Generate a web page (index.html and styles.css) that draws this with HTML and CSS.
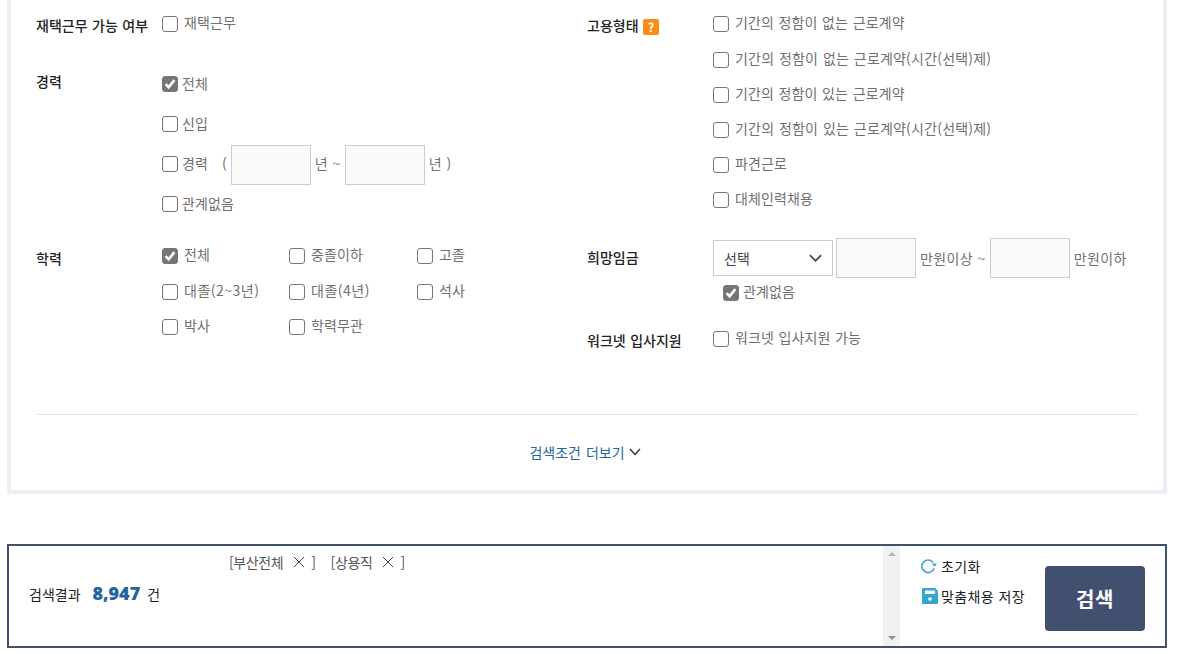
FILE: index.html
```html
<!DOCTYPE html>
<html lang="ko">
<head>
    <meta charset="UTF-8">
    <meta name="viewport" content="width=device-width, initial-scale=1.0">
    <title>채용정보 상세검색</title>
    <link rel="stylesheet" href="styles.css">
</head>
<body>

    <div class="search-panel">
        <div class="search-columns">
            <div class="search-col">
                <div class="field field-top">
                    <div class="field-label">재택근무 가능 여부</div>
                    <div class="field-body">
                        <label class="check-row"><span class="box"></span>재택근무</label>
                    </div>
                </div>

                <div class="field field-career">
                    <div class="field-label">경력</div>
                    <div class="field-body">
                        <label class="check-row tall tight"><span class="box on"><svg viewBox="0 0 14 14"><path d="M2.6 7.2 5.6 10.2 11.4 3.2" /></svg></span>전체</label>
                        <label class="check-row tall tight"><span class="box"></span>신입</label>
                        <div class="check-row tall tight">
                            <span class="box"></span>경력
                            <span class="paren">(</span>
                            <input type="text" class="text-box">
                            <span class="unit">년 ~</span>
                            <input type="text" class="text-box">
                            <span class="unit">년 )</span>
                        </div>
                        <label class="check-row tall tight"><span class="box"></span>관계없음</label>
                    </div>
                </div>

                <div class="field field-edu">
                    <div class="field-label">학력</div>
                    <div class="field-body edu-grid">
                        <label class="check-row"><span class="box on"><svg viewBox="0 0 14 14"><path d="M2.6 7.2 5.6 10.2 11.4 3.2" /></svg></span>전체</label>
                        <label class="check-row"><span class="box"></span>중졸이하</label>
                        <label class="check-row"><span class="box"></span>고졸</label>
                        <label class="check-row edu-wide"><span class="box"></span>대졸(2~3년)</label>
                        <label class="check-row edu-wide"><span class="box"></span>대졸(4년)</label>
                        <label class="check-row"><span class="box"></span>석사</label>
                        <label class="check-row"><span class="box"></span>박사</label>
                        <label class="check-row"><span class="box"></span>학력무관</label>
                    </div>
                </div>
            </div>

            <div class="search-col">
                <div class="field field-top">
                    <div class="field-label">고용형태 <span class="help-badge">?</span></div>
                    <div class="field-body">
                        <label class="check-row"><span class="box"></span>기간의 정함이 없는 근로계약</label>
                        <label class="check-row wide-text"><span class="box"></span>기간의 정함이 없는 근로계약(시간(선택)제)</label>
                        <label class="check-row"><span class="box"></span>기간의 정함이 있는 근로계약</label>
                        <label class="check-row wide-text"><span class="box"></span>기간의 정함이 있는 근로계약(시간(선택)제)</label>
                        <label class="check-row"><span class="box"></span>파견근로</label>
                        <label class="check-row"><span class="box"></span>대체인력채용</label>
                    </div>
                </div>

                <div class="field field-pay">
                    <div class="field-label">희망임금</div>
                    <div class="field-body">
                        <div class="pay-row">
                            <div class="select-box">선택
                                <svg viewBox="0 0 14 8"><path d="M1 1 7 7 13 1" /></svg>
                            </div>
                            <input type="text" class="text-box">
                            <span class="unit">만원이상 ~</span>
                            <input type="text" class="text-box">
                            <span class="unit">만원이하</span>
                        </div>
                        <label class="check-row pay-none tight"><span class="box on"><svg viewBox="0 0 14 14"><path d="M2.6 7.2 5.6 10.2 11.4 3.2" /></svg></span>관계없음</label>
                    </div>
                </div>

                <div class="field field-worknet">
                    <div class="field-label">워크넷 입사지원</div>
                    <div class="field-body">
                        <label class="check-row"><span class="box"></span>워크넷 입사지원 가능</label>
                    </div>
                </div>
            </div>
        </div>

        <div class="more-row">
            <a class="more-link" href="#">검색조건 더보기
                <svg viewBox="0 0 12 8"><path d="M1 1 6 6.5 11 1" /></svg>
            </a>
        </div>
    </div>

    <div class="result-bar">
        <div class="result-count">검색결과 <strong>8,947</strong> 건</div>
        <div class="result-tags">
            <span class="tag">[부산전체<svg viewBox="0 0 12 12"><path d="M1 1 11 11M11 1 1 11" /></svg>]</span>
            <span class="tag">[상용직<svg viewBox="0 0 12 12"><path d="M1 1 11 11M11 1 1 11" /></svg>]</span>
        </div>
        <div class="fake-scroll">
            <span class="arrow-up"></span>
            <span class="arrow-down"></span>
        </div>
        <div class="result-actions">
            <a class="action-link" href="#">
                <svg class="icon-reset" viewBox="0 0 16 16"><path d="M13.2 10.2A6.3 6.3 0 1 1 12.2 4.4" /><path class="fill" d="M10.8 5.4H16L13.6 8.8Z" /></svg>초기화
            </a>
            <a class="action-link" href="#">
                <svg class="icon-save" viewBox="0 0 16 16"><path class="fill" fill-rule="evenodd" d="M1 0H13L16 3V15A1 1 0 0 1 15 16H1A1 1 0 0 1 0 15V1A1 1 0 0 1 1 0ZM3 2.5V6H13V2.5ZM8 9.2A1.8 1.8 0 1 0 8 12.8 1.8 1.8 0 0 0 8 9.2Z" /></svg>맞춤채용 저장
            </a>
        </div>
        <button type="button" class="search-button">검색</button>
    </div>

</body>
</html>
```

FILE: styles.css
```css
:root {
    --navy: #42506f;
    --line: #cccccc;
    --text-gray: #6f6f6f;
    --text-dark: #222222;
    --blue: #22649e;
}

* {
    margin: 0;
    padding: 0;
    box-sizing: border-box;
    font-family: "Noto Sans CJK KR", "Noto Sans", sans-serif;
}

body {
    width: 1178px;
    height: 654px;
    overflow: hidden;
    padding-left: 7px;
    background: #fff;
    font-size: 14px;
    color: var(--text-gray);
}

.search-panel {
    width: 1160px;
    height: 494px;
    padding: 6.8px 25px 0;
    border: 4px solid #ebeef2;
    border-top: 0;
}

.search-columns {
    display: grid;
    grid-template-columns: 1fr 1fr;
    height: 408px;
    border-bottom: 1px solid #dfe3e8;
}

.field {
    display: flex;
}

.field-label {
    width: 126px;
    flex-shrink: 0;
    padding-top: 9px;
    line-height: 20px;
    font-weight: 500;
    color: var(--text-dark);
    word-spacing: 0.6px;
}

.field-top .field-label {
    padding-top: 8px;
}

.field-career {
    margin-top: 22px;
}

.field-career .field-label {
    padding-top: 7px;
}

.field-edu {
    margin-top: 14.8px;
}

.field-pay {
    margin-top: 20px;
}

.field-worknet {
    margin-top: 13.4px;
}

.check-row {
    display: flex;
    align-items: center;
    height: 35.2px;
    padding-bottom: 4px;
    white-space: nowrap;
    line-height: 20px;
    word-spacing: 0.6px;
    letter-spacing: 0.1px;
}

.check-row.tall {
    height: 40px;
    padding-bottom: 2px;
}

.check-row.wide-text {
    letter-spacing: 0.2px;
}

.check-row.edu-wide {
    letter-spacing: 0.5px;
}

.box {
    width: 16px;
    height: 16px;
    margin: 4px 6px 0 0;
    flex-shrink: 0;
    border: 1px solid #767676;
    border-radius: 3px;
    background: #fff;
}

.check-row.tall .box {
    margin-top: 2px;
}

.check-row.tight .box {
    margin-right: 4px;
}

.box.on {
    background: #767676;
}

.box svg {
    display: block;
    width: 14px;
    height: 14px;
}

.box svg path {
    fill: none;
    stroke: #fff;
    stroke-width: 2.6;
}

.paren {
    margin: 0 4px 0 14px;
}

.text-box {
    width: 80px;
    height: 40px;
    border: 1px solid var(--line);
    background: #fafafa;
}

.check-row .text-box {
    margin-top: 4px;
}

.unit {
    margin: 0 4.5px 0 4px;
}

.edu-grid {
    display: grid;
    grid-template-columns: 127px 128px 60px;
    align-content: start;
}

.pay-row {
    display: flex;
    align-items: center;
    height: 40px;
    white-space: nowrap;
}

.pay-row .unit {
    margin: 0 4px;
    letter-spacing: 0.4px;
}

.select-box {
    width: 120px;
    height: 36px;
    margin-right: 3px;
    padding: 0 10px;
    display: flex;
    align-items: center;
    justify-content: space-between;
    border: 1px solid var(--line);
    background: #fff;
    color: #444;
}

.select-box svg {
    width: 13px;
    height: 8px;
}

.select-box svg path {
    fill: none;
    stroke: #444;
    stroke-width: 1.8;
}

.check-row.pay-none {
    height: 30px;
    margin-left: 10px;
}

.help-badge {
    display: inline-block;
    width: 16px;
    height: 16px;
    border-radius: 2px;
    background: #ff8c12;
    color: #fff;
    font-size: 12px;
    font-weight: 700;
    line-height: 16px;
    text-align: center;
    vertical-align: -1px;
}

.more-row {
    height: 75px;
    display: flex;
    align-items: center;
    justify-content: center;
    padding-right: 4px;
}

.more-link {
    display: flex;
    align-items: center;
    gap: 4px;
    color: var(--blue);
    text-decoration: none;
    word-spacing: 1px;
}

.more-link svg {
    width: 12px;
    height: 8px;
}

.more-link svg path {
    fill: none;
    stroke: #333;
    stroke-width: 1.4;
}

.result-bar {
    width: 1160px;
    height: 104px;
    margin-top: 50px;
    display: flex;
    border: 2px solid var(--navy);
    color: var(--text-dark);
}

.result-count {
    width: 220px;
    padding: 0 0 6px 20px;
    align-self: center;
    line-height: 20px;
    white-space: nowrap;
    word-spacing: 2px;
}

.result-count strong {
    margin: 0 1px 0 6px;
    color: var(--blue);
    font-family: "Open Sans", sans-serif;
    font-size: 18px;
    font-weight: 800;
}

.result-tags {
    flex: 1;
    padding-top: 6px;
    display: flex;
    gap: 15px;
    line-height: 20px;
    color: #555;
}

.tag {
    display: flex;
    align-items: center;
    height: 20px;
    letter-spacing: -0.4px;
    white-space: nowrap;
}

.tag svg {
    width: 12px;
    height: 12px;
    margin: 0 6px 0 10px;
}

.tag svg path {
    fill: none;
    stroke: #444;
    stroke-width: 1;
}

.fake-scroll {
    width: 17px;
    display: flex;
    flex-direction: column;
    align-items: center;
    justify-content: space-between;
    padding: 6px 0;
    background: #f1f1f1;
}

.arrow-up {
    border: 4px solid transparent;
    border-top: 0;
    border-bottom: 4px solid #b5b5b5;
}

.arrow-down {
    border: 4px solid transparent;
    border-bottom: 0;
    border-top: 4px solid #8f8f8f;
}

.result-actions {
    width: 145px;
    padding: 10px 0 0 21px;
    display: flex;
    flex-direction: column;
    gap: 10px;
}

.action-link {
    display: flex;
    align-items: center;
    gap: 4px;
    height: 20px;
    color: var(--text-dark);
    text-decoration: none;
    letter-spacing: 0.4px;
    white-space: nowrap;
}

.action-link svg {
    width: 16px;
    height: 16px;
    flex-shrink: 0;
}

.action-link .icon-save {
    margin: 0 -1px 0 1px;
}

.icon-reset path {
    fill: none;
    stroke: #3fa9cf;
    stroke-width: 1.6;
}

.icon-reset path.fill,
.icon-save path.fill {
    fill: #35a6cf;
    stroke: none;
}

.search-button {
    width: 100px;
    height: 65px;
    margin: 20px 20px 0 0;
    border: none;
    border-radius: 4px;
    background: var(--navy);
    color: #fff;
    font-size: 20px;
    font-weight: 700;
    letter-spacing: 0.5px;
}
```
